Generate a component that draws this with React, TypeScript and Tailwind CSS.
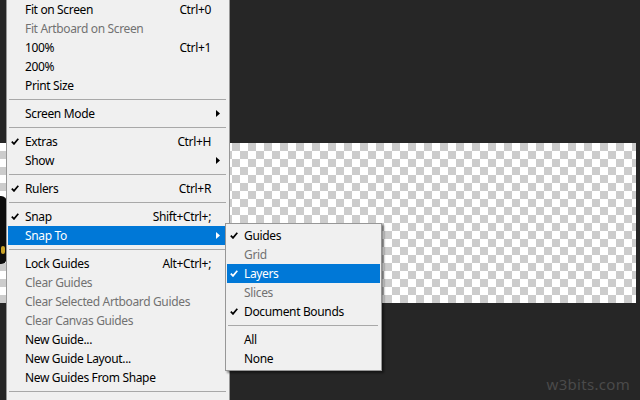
import React from 'react';

type Item =
  | 'sep'
  | {
      label: string;
      shortcut?: string;
      checked?: boolean;
      disabled?: boolean;
      submenu?: boolean;
      active?: boolean;
    };

const viewMenu: Item[] = [
  { label: 'Fit on Screen', shortcut: 'Ctrl+0' },
  { label: 'Fit Artboard on Screen', disabled: true },
  { label: '100%', shortcut: 'Ctrl+1' },
  { label: '200%' },
  { label: 'Print Size' },
  'sep',
  { label: 'Screen Mode', submenu: true },
  'sep',
  { label: 'Extras', checked: true, shortcut: 'Ctrl+H' },
  { label: 'Show', submenu: true },
  'sep',
  { label: 'Rulers', checked: true, shortcut: 'Ctrl+R' },
  'sep',
  { label: 'Snap', checked: true, shortcut: 'Shift+Ctrl+;' },
  { label: 'Snap To', submenu: true, active: true },
  'sep',
  { label: 'Lock Guides', shortcut: 'Alt+Ctrl+;' },
  { label: 'Clear Guides', disabled: true },
  { label: 'Clear Selected Artboard Guides', disabled: true },
  { label: 'Clear Canvas Guides', disabled: true },
  { label: 'New Guide...' },
  { label: 'New Guide Layout...' },
  { label: 'New Guides From Shape' },
  'sep',
];

const snapMenu: Item[] = [
  { label: 'Guides', checked: true },
  { label: 'Grid', disabled: true },
  { label: 'Layers', checked: true, active: true },
  { label: 'Slices', disabled: true },
  { label: 'Document Bounds', checked: true },
  'sep',
  { label: 'All' },
  { label: 'None' },
];

const Check = ({ light }: { light?: boolean }) => (
  <svg width="8" height="7" viewBox="0 0 8 7" className={light ? 'text-white' : 'text-black'}>
    <path d="M0.8 3.6 L3 5.9 L7.3 0.8" fill="none" stroke="currentColor" strokeWidth="1.7" />
  </svg>
);

const Arrow = ({ light }: { light?: boolean }) => (
  <svg width="4" height="7" viewBox="0 0 4 7" className={light ? 'text-white' : 'text-black'}>
    <path d="M0 0 L4 3.5 L0 7 Z" fill="currentColor" />
  </svg>
);

const Menu = ({ items }: { items: Item[] }) => (
  <>
    {items.map((item, i) => {
      if (item === 'sep') {
        return (
          <div key={i} className="h-[9px] flex items-center">
            <div className="h-px flex-1 ml-px mr-[2px] bg-[#a8a8a8]" />
          </div>
        );
      }
      const color = item.active ? 'text-white' : item.disabled ? 'text-[#727272]' : 'text-black';
      return (
        <div
          key={i}
          className={`flex h-[19px] items-center whitespace-nowrap ${color} ${item.active ? 'bg-[#0078d7]' : ''}`}
        >
          <div className="w-[17px] pl-[3px] flex items-center">
            {item.checked && <Check light={item.active} />}
          </div>
          <span className="flex-1">{item.label}</span>
          {item.shortcut && <span>{item.shortcut}</span>}
          <div className="w-[17px] pl-[5px] flex items-center">
            {item.submenu && <Arrow light={item.active} />}
          </div>
        </div>
      );
    })}
  </>
);

export default function App() {
  return (
    <div className="relative w-[640px] h-[400px] overflow-hidden bg-[#262626] font-['Noto_Sans',sans-serif] text-[12px] tracking-[-0.35px]">
      <div className="mt-[143px] h-[160px] w-[636px] bg-[repeating-conic-gradient(#cccccc_0%_25%,#ffffff_0%_50%)] bg-[length:16px_16px]" />

      {/* bit of artwork peeking out at the left edge */}
      <div className="absolute left-[-6px] top-[196px] w-[13px] h-[68px] rounded-[6px] bg-[#0d0d0d]">
        <div className="absolute left-[7px] top-[50px] w-[4px] h-[8px] rounded-full bg-[#c9a227]" />
      </div>

      {/* View menu */}
      <div className="absolute left-[6px] top-0 h-[402px] w-[224px] border-x border-[#979797] bg-[#f0f0f0] px-px">
        <Menu items={viewMenu} />
      </div>

      {/* Snap To submenu */}
      <div className="absolute left-[225px] top-[223px] w-[157px] border border-[#979797] bg-[#f0f0f0] px-px py-[2px] shadow-[2px_2px_2px_rgba(0,0,0,0.45)]">
        <Menu items={snapMenu} />
      </div>

      <div className="absolute right-[10px] bottom-[5px] text-[15px] text-[#4a4a4a] tracking-[0.3px]">
        w3bits.com
      </div>
    </div>
  );
}
